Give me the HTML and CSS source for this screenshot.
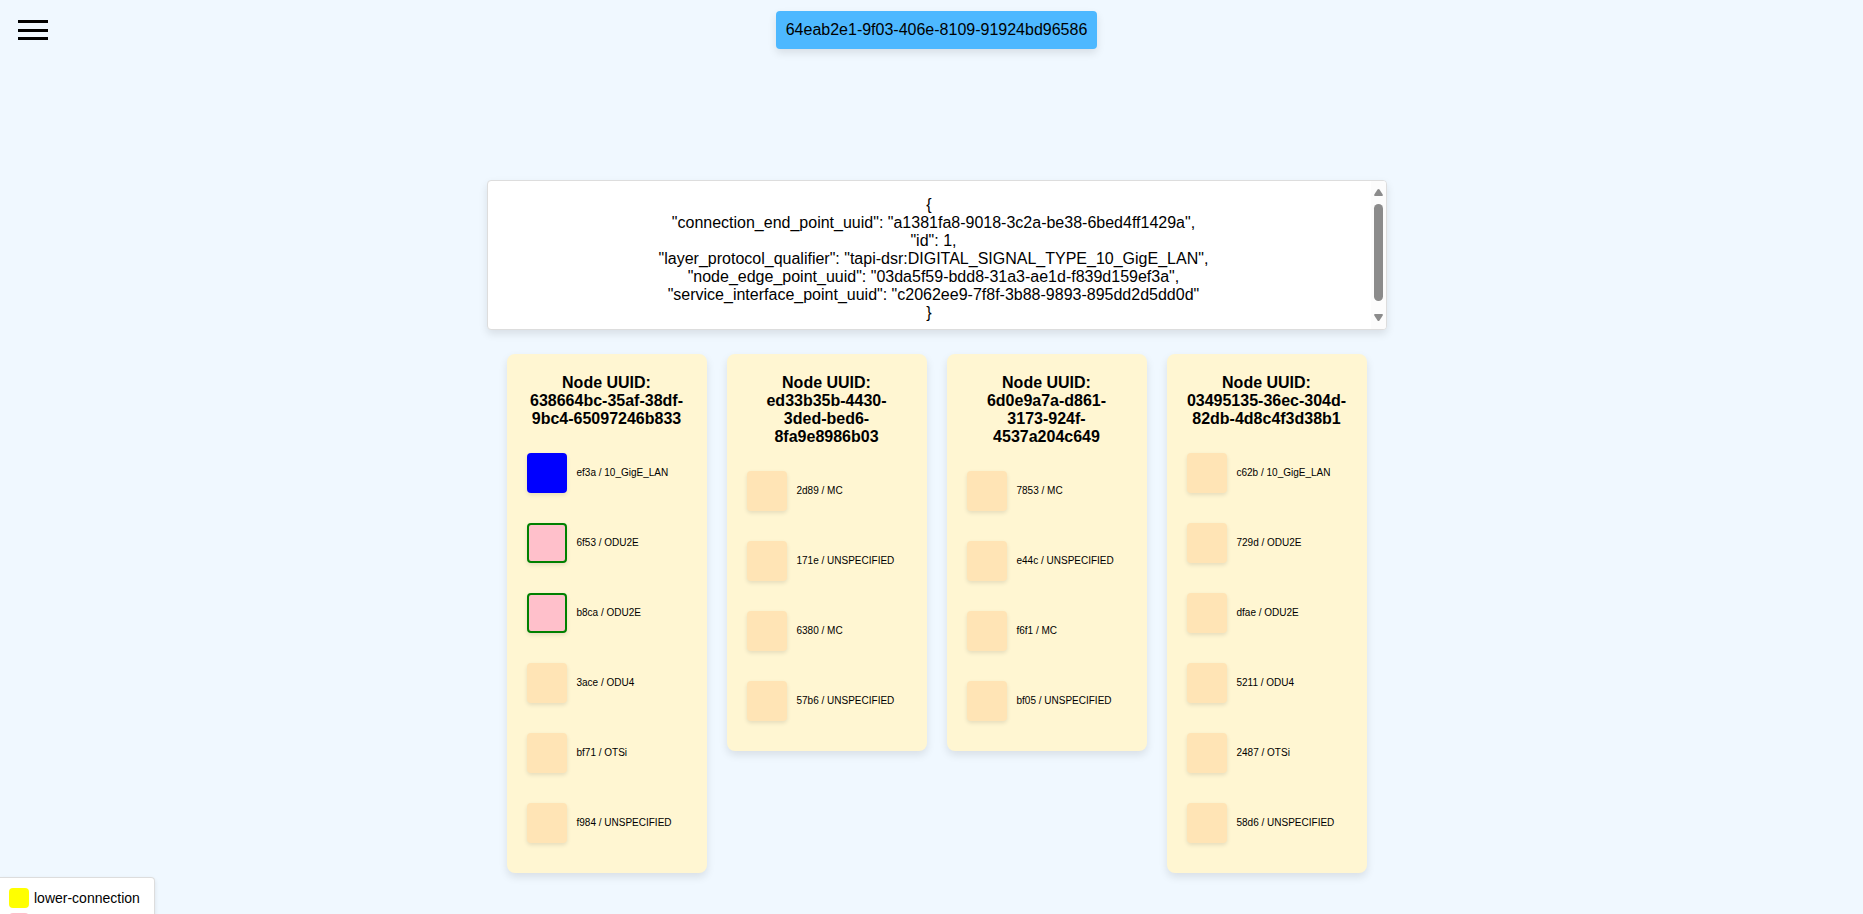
FILE: index.html
```html
<!DOCTYPE html>
<html lang="en">
<head>
<meta charset="utf-8">
<meta name="viewport" content="width=device-width, initial-scale=1">
<title>Connection</title>
<link rel="stylesheet" href="styles.css">
</head>
<body>
<header class="top">
  <button class="menu" type="button" aria-label="Menu">
    <svg width="30" height="20" viewBox="0 0 30 20" aria-hidden="true"><path d="M0 0h30v3H0zM0 9h30v3H0zM0 17h30v3H0z"/></svg>
  </button>
  <button class="service" type="button">64eab2e1-9f03-406e-8109-91924bd96586</button>
</header>
<main class="main">
  <section class="details">
    <pre class="json">{
  "connection_end_point_uuid": "a1381fa8-9018-3c2a-be38-6bed4ff1429a",
  "id": 1,
  "layer_protocol_qualifier": "tapi-dsr:DIGITAL_SIGNAL_TYPE_10_GigE_LAN",
  "node_edge_point_uuid": "03da5f59-bdd8-31a3-ae1d-f839d159ef3a",
  "service_interface_point_uuid": "c2062ee9-7f8f-3b88-9893-895dd2d5dd0d"
}</pre>
    <div class="scrollbar" aria-hidden="true">
      <svg width="9" height="7" viewBox="0 0 9 7"><path d="M3.5 .6Q4.5-.5 5.5 .6L8.7 5.4Q9.3 7 8 7H1Q-.3 7 .3 5.4z"/></svg>
      <span class="thumb"></span>
      <svg width="9" height="7" viewBox="0 0 9 7"><path d="M3.5 6.4Q4.5 7.5 5.5 6.4L8.7 1.6Q9.3 0 8 0H1Q-.3 0 .3 1.6z"/></svg>
    </div>
  </section>
  <div class="nodes">
    <section class="node">
      <h2 class="node-title">Node UUID: 638664bc-35af-38df-9bc4-65097246b833</h2>
      <div class="point"><button class="box selected" type="button" id="p1" aria-labelledby="l1"></button><label class="label" id="l1" for="p1">ef3a / 10_GigE_LAN</label></div>
      <div class="point"><button class="box related" type="button" id="p2" aria-labelledby="l2"></button><label class="label" id="l2" for="p2">6f53 / ODU2E</label></div>
      <div class="point"><button class="box related" type="button" id="p3" aria-labelledby="l3"></button><label class="label" id="l3" for="p3">b8ca / ODU2E</label></div>
      <div class="point"><button class="box" type="button" id="p4" aria-labelledby="l4"></button><label class="label" id="l4" for="p4">3ace / ODU4</label></div>
      <div class="point"><button class="box" type="button" id="p5" aria-labelledby="l5"></button><label class="label" id="l5" for="p5">bf71 / OTSi</label></div>
      <div class="point"><button class="box" type="button" id="p6" aria-labelledby="l6"></button><label class="label" id="l6" for="p6">f984 / UNSPECIFIED</label></div>
    </section>
    <section class="node">
      <h2 class="node-title">Node UUID: ed33b35b-4430-3ded-bed6-8fa9e8986b03</h2>
      <div class="point"><button class="box" type="button" id="p7" aria-labelledby="l7"></button><label class="label" id="l7" for="p7">2d89 / MC</label></div>
      <div class="point"><button class="box" type="button" id="p8" aria-labelledby="l8"></button><label class="label" id="l8" for="p8">171e / UNSPECIFIED</label></div>
      <div class="point"><button class="box" type="button" id="p9" aria-labelledby="l9"></button><label class="label" id="l9" for="p9">6380 / MC</label></div>
      <div class="point"><button class="box" type="button" id="p10" aria-labelledby="l10"></button><label class="label" id="l10" for="p10">57b6 / UNSPECIFIED</label></div>
    </section>
    <section class="node">
      <h2 class="node-title">Node UUID: 6d0e9a7a-d861-3173-924f-4537a204c649</h2>
      <div class="point"><button class="box" type="button" id="p11" aria-labelledby="l11"></button><label class="label" id="l11" for="p11">7853 / MC</label></div>
      <div class="point"><button class="box" type="button" id="p12" aria-labelledby="l12"></button><label class="label" id="l12" for="p12">e44c / UNSPECIFIED</label></div>
      <div class="point"><button class="box" type="button" id="p13" aria-labelledby="l13"></button><label class="label" id="l13" for="p13">f6f1 / MC</label></div>
      <div class="point"><button class="box" type="button" id="p14" aria-labelledby="l14"></button><label class="label" id="l14" for="p14">bf05 / UNSPECIFIED</label></div>
    </section>
    <section class="node">
      <h2 class="node-title">Node UUID: 03495135-36ec-304d-82db-4d8c4f3d38b1</h2>
      <div class="point"><button class="box" type="button" id="p15" aria-labelledby="l15"></button><label class="label" id="l15" for="p15">c62b / 10_GigE_LAN</label></div>
      <div class="point"><button class="box" type="button" id="p16" aria-labelledby="l16"></button><label class="label" id="l16" for="p16">729d / ODU2E</label></div>
      <div class="point"><button class="box" type="button" id="p17" aria-labelledby="l17"></button><label class="label" id="l17" for="p17">dfae / ODU2E</label></div>
      <div class="point"><button class="box" type="button" id="p18" aria-labelledby="l18"></button><label class="label" id="l18" for="p18">5211 / ODU4</label></div>
      <div class="point"><button class="box" type="button" id="p19" aria-labelledby="l19"></button><label class="label" id="l19" for="p19">2487 / OTSi</label></div>
      <div class="point"><button class="box" type="button" id="p20" aria-labelledby="l20"></button><label class="label" id="l20" for="p20">58d6 / UNSPECIFIED</label></div>
    </section>
  </div>
</main>
<ul class="legend">
  <li class="legend-row"><span class="swatch yellow"></span>lower-connection</li>
  <li class="legend-row"><span class="swatch pink"></span></li>
</ul>
</body>
</html>
```
FILE: styles.css
```css
* {
  box-sizing: border-box;
}

body {
  margin: 0;
  height: 100vh;
  overflow: hidden;
  background: #f0f8ff;
  color: #000;
  font: 16px/18px "Liberation Sans", Arial, sans-serif;
}

button {
  border: 0;
  padding: 0;
  color: inherit;
  font: inherit;
  cursor: pointer;
}

.top {
  display: grid;
  grid-template-columns: 1fr auto 1fr;
  align-items: start;
  padding: 11px 0 0 10px;
}

.menu {
  justify-self: start;
  margin: 9px 0 0 8px;
  background: none;
}

.menu svg {
  display: block;
}

.service {
  padding: 10px;
  border-radius: 4px;
  background: #4db8ff;
  box-shadow: 0 4px 8px rgba(0, 0, 0, 0.1);
}

.main {
  display: flex;
  flex-direction: column;
  align-items: center;
  gap: 24px;
  padding: 131px 0 0 10px;
}

.details {
  display: flex;
  width: 100%;
  max-width: 900px;
  border: 1px solid #ddd;
  border-radius: 4px;
  background: #fff;
  box-shadow: 0 4px 8px rgba(0, 0, 0, 0.1);
  overflow: hidden;
}

.json {
  flex: 1;
  margin: 0;
  padding: 15px 0 7px;
  text-align: center;
  font: inherit;
  white-space: break-spaces;
}

.scrollbar {
  display: flex;
  flex-direction: column;
  align-items: center;
  justify-content: space-between;
  width: 15px;
  padding: 8px 0;
  background: #fcfcfc;
  fill: #8b8b8b;
}

.thumb {
  flex: 1;
  width: 9px;
  margin: 8px 0 13px;
  border-radius: 5px;
  background: #8b8b8b;
}

.nodes {
  display: flex;
  align-items: flex-start;
  gap: 20px;
}

.node {
  width: 200px;
  padding: 20px 20px 15px;
  border-radius: 8px;
  background: #fff6d2;
  box-shadow: 0 4px 8px rgba(0, 0, 0, 0.1);
}

.node-title {
  margin: 0 0 10px;
  text-align: center;
  font-size: 16px;
}

.point {
  display: flex;
  align-items: center;
  gap: 10px;
  height: 70px;
}

.box {
  flex: none;
  width: 40px;
  height: 40px;
  border-radius: 4px;
  background: #ffe4b5;
  box-shadow: 0 2px 4px rgba(0, 0, 0, 0.1);
}

.selected {
  background: #00f;
}

.related {
  border: 2px solid green;
  background: pink;
}

.label {
  font-size: 10px;
  line-height: 12px;
  white-space: nowrap;
}

.legend {
  display: flex;
  flex-direction: column;
  gap: 5px;
  width: fit-content;
  margin: 4px 0 0;
  padding: 10px 14px 10px 9px;
  border: 1px solid #ddd;
  border-left: 0;
  border-radius: 0 4px 4px 0;
  background: #fff;
  box-shadow: 0 2px 4px rgba(0, 0, 0, 0.1);
  list-style: none;
  font-size: 14px;
}

.legend-row {
  display: flex;
  align-items: center;
  gap: 5px;
}

.swatch {
  width: 20px;
  height: 20px;
  border-radius: 4px;
}

.yellow {
  background: yellow;
}

.pink {
  background: pink;
}
```
